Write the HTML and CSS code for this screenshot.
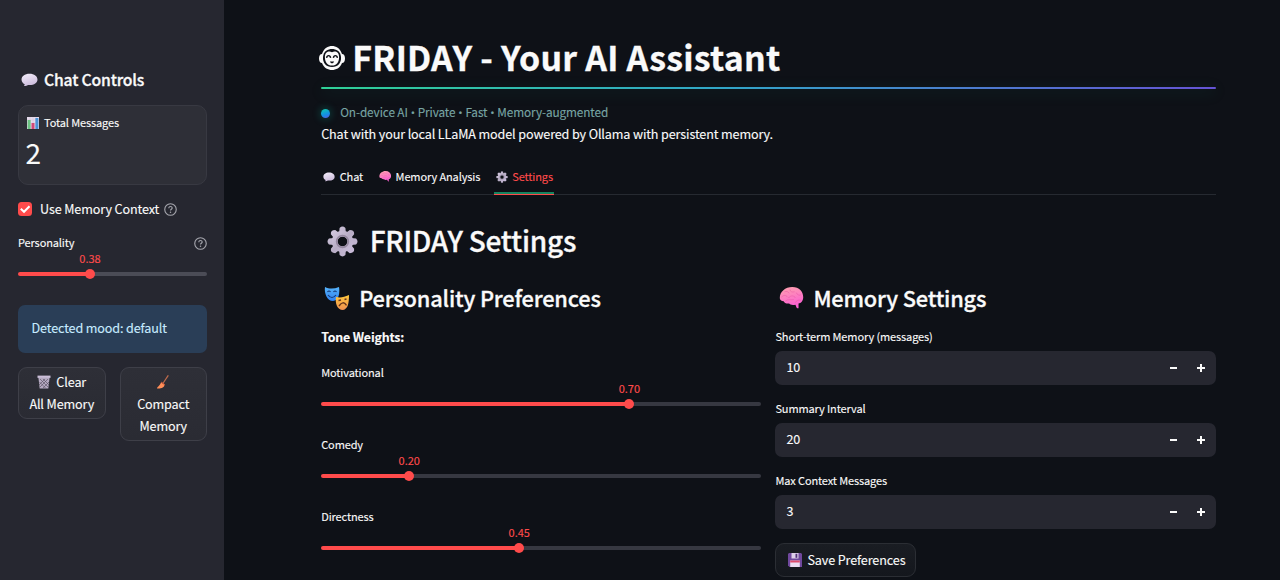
FILE: index.html
```html
<!DOCTYPE html>
<html lang="en">
<head>
<meta charset="utf-8">
<title>FRIDAY - Your AI Assistant</title>
<link rel="stylesheet" href="styles.css">
</head>
<body>
<svg class="defs" width="0" height="0" aria-hidden="true">
  <defs>
    <linearGradient id="lilac" x1="0" y1="0" x2="0.4" y2="1"><stop offset="0" stop-color="#f5effb"/><stop offset="1" stop-color="#cdbddd"/></linearGradient>
    <linearGradient id="steel" x1="0" y1="0" x2="1" y2="1"><stop offset="0" stop-color="#d5cbe2"/><stop offset="0.5" stop-color="#b8adc5"/><stop offset="1" stop-color="#cabddc"/></linearGradient>
    <linearGradient id="pink" x1="0" y1="0" x2="0.3" y2="1"><stop offset="0" stop-color="#ffa3ad"/><stop offset="1" stop-color="#fb5fd2"/></linearGradient>
    <linearGradient id="blue" x1="0" y1="0" x2="0" y2="1"><stop offset="0" stop-color="#56b4fb"/><stop offset="1" stop-color="#2f80ee"/></linearGradient>
    <linearGradient id="amber" x1="0" y1="0" x2="0" y2="1"><stop offset="0" stop-color="#ffc83d"/><stop offset="1" stop-color="#ef9050"/></linearGradient>
    <symbol id="bubble" viewBox="0 0 32 26"><path d="M16 1C7 1 1 5.700 1 12c0 4 2.300 7 6 9-.2 1.500-.9 2.500-1.500 3.200 3 .3 5.800-.8 7.500-2 9.800 1.200 18-2.700 18-10.200C31 5.700 25 1 16 1z" fill="url(#lilac)"/></symbol>
    <symbol id="brain" viewBox="0 0 32 28"><path d="M1 14C1 6 8 0 17 0s14 6 14 13c0 5-3 7.500-6 8v6c-3 .5-3-3-4-4.500-4 1-7 0-8-1.500-4 .5-6-1-7-3-3 0-5-1.500-5-4z" fill="url(#pink)"/><path d="M7 6c3-1 5 0 6 2M14 3c0 3 3 4 6 3M3 13c3-3 6-3 8 0M12 14c3-4 8-3 9 0M22 7c1 3 4 4 6 3M8 18c3-3 8-1 11-2M21 20c1-3 4-4 7-3" fill="none" stroke="#e653a0" stroke-opacity=".6" stroke-width="1"/></symbol>
    <symbol id="gear" viewBox="0 0 32 32"><g fill="url(#steel)"><path d="M12.500 7l.5-5q3-3 6 0l.5 5zM12.500 25l.5 5q3 3 6 0l.5-5zM7 12.500l-5 .5q-3 3 0 6l5 .5zM25 12.500l5 .5q3 3 0 6l-5 .5z"/><path d="M7.500 13L4 8.500Q3.500 4 8.500 4L13 7.500zM24.500 13L28 8.500Q28.500 4 23.500 4L19 7.500zM7.500 19L4 23.500Q3.500 28 8.500 28l4.500-3.500zM24.500 19l3.500 4.500q.5 4.500-4.500 4.500L19 24.500z"/><path fill-rule="evenodd" d="M16 5a11 11 0 1 0 0 22 11 11 0 0 0 0-22zm0 6a5 5 0 1 1 0 10 5 5 0 0 1 0-10z"/></g><circle cx="16" cy="16" r="6" fill="none" stroke="#94889f" stroke-width="1.800"/></symbol>
    <symbol id="help" viewBox="0 0 14 14"><circle cx="7" cy="7" r="6.200" fill="none" stroke="#a5a6ad" stroke-width="1.200"/><path d="M5.200 5.600c0-2.500 3.700-2.300 3.600-.1C8.700 6.800 7 6.800 7 8.200" fill="none" stroke="#a5a6ad" stroke-width="1.200"/><circle cx="7" cy="10" r=".8" fill="#a5a6ad"/></symbol>
  </defs>
</svg>
<div class="app">
  <aside class="sidebar">
    <h2 class="side-title"><svg class="side-bubble"><use href="#bubble"/></svg><span>Chat Controls</span></h2>
    <section class="metric">
      <div class="metric-label">
        <svg class="chart" viewBox="0 0 12 12"><rect width="12" height="12" fill="#e6dced"/><path d="M0 3h12M0 6h12M0 9h12M3 0v12M6 0v12M9 0v12" stroke="#c9bdd4" stroke-width=".4"/><path d="M.6 3h3v9h-3z" fill="#6cc382"/><path d="M4.500 6h3v6h-3z" fill="#d24a78"/><path d="M8.400 1h3v11h-3z" fill="#4c94d8"/></svg>
        <span>Total Messages</span>
      </div>
      <div class="metric-value">2</div>
    </section>
    <label class="check-row">
      <svg class="checkbox" viewBox="0 0 14 14"><rect width="14" height="14" rx="3.500" fill="#ff4b4b"/><path d="M2.800 6.800l3.200 3L11.500 4.200" fill="none" stroke="#fff" stroke-width="2"/></svg>
      <span class="check-text">Use Memory Context</span>
      <svg class="help"><use href="#help"/></svg>
    </label>
    <div class="slider side-slider" style="--v:38.1%">
      <div class="label"><span>Personality</span><svg class="help"><use href="#help"/></svg></div>
      <div class="range"><span class="value">0.38</span><div class="track"></div><i class="thumb"></i></div>
    </div>
    <div class="info">Detected mood: default</div>
    <div class="side-actions">
      <button class="btn side-btn"><svg class="bin" viewBox="0 0 14 14"><path d="M1.400 2.500h11.200L11.300 13.600H2.700z" fill="#b5aac1"/><path d="M3 4l8 8M6 4l6 6M2.500 7l6 6M11 4l-8 8M8 4l-6 6M12 7l-6 6" stroke="#5a5263" stroke-width=".65"/><path d="M.5 .6h13v2.300H.5z" fill="#cbbfd8"/></svg><span class="clear-text">Clear</span><br>All Memory</button>
      <button class="btn side-btn"><svg class="broom" viewBox="0 0 14 14"><path d="M12.300 .3L7.200 8" stroke="#bf6c4c" stroke-width="1.200"/><path d="M5 7.500l3.500 2.300c-.3 2.700-2.500 3.900-7.500 3.700.3-1.800 2.500-2.500 4-6z" fill="#ff8e58"/><path d="M5.300 7.200l3.400 2.400" stroke="#ef613d" stroke-width="1"/></svg><br>Compact<br>Memory</button>
    </div>
  </aside>
  <main class="main">
    <h1 class="title">
      <svg class="face" viewBox="0 0 28 26"><path d="M4 9C6 3 10 1 14 1s8 2 10 8c2 0 3 2 3 4.500S26 18 24 18c-2 5-6 7-10 7S6 23 4 18c-2 0-3-2-3-4.500S2 9 4 9z" fill="#fafafa"/><path d="M5 12C5.500 6 10 4 14 4s8.500 2 9 8c.4 6-3 10-9 10S4.600 18 5 12z" fill="#0e1117"/><path d="M6.900 12c0-5 4.100-6.500 7.100-4.700 3-1.800 7.100-.3 7.100 4.700 0 5.400-2.500 8.600-7.100 8.600S6.900 17.400 6.900 12z" fill="#fafafa"/><path d="M8.600 12.900c.4-3 3.600-3 4 0M15.400 12.900c.4-3 3.600-3 4 0" fill="none" stroke="#0e1117" stroke-width="1.400"/><path d="M11.900 16.500h4.200c-.7 2.400-3.500 2.400-4.200 0z" fill="#0e1117"/></svg>
      <span>FRIDAY - Your AI Assistant</span>
    </h1>
    <div class="rule"></div>
    <div class="status"><i class="dot"></i><span>On-device AI<b class="sep"> • </b>Private<b class="sep"> • </b>Fast<b class="sep"> • </b>Memory-augmented</span></div>
    <p class="intro">Chat with your local LLaMA model powered by Ollama with persistent memory.</p>
    <nav class="tabs">
      <a class="tab tab-chat"><svg class="tab-bubble"><use href="#bubble"/></svg><span>Chat</span></a>
      <a class="tab tab-memory"><svg class="tab-brain"><use href="#brain"/></svg><span>Memory Analysis</span></a>
      <a class="tab tab-settings active"><svg class="tab-gear"><use href="#gear"/></svg><span>Settings</span></a>
    </nav>
    <h2 class="page-title"><svg class="big-gear"><use href="#gear"/></svg><span>FRIDAY Settings</span></h2>
    <div class="columns">
      <section class="column">
        <h3 class="section-title personality">
          <svg class="masks" viewBox="0 0 26 26"><path d="M1 2c4 2 9 2 14 0 1 5 0 14-6 14S0 8 1 2z" fill="url(#blue)"/><path d="M3.500 7q1.500-2 3 0M9.500 7q1.500-2 3 0M4 10q4 5 8 0" fill="none" stroke="#173875" stroke-width="1.200"/><path d="M12 12c5 1 8 0 13-2 0 8-1 14-6 15-6 0-8-7-7-13z" fill="url(#amber)"/><path d="M14.500 15.500l2.500-.5M20.500 14.500l2-.5M15 21q4-6 7.500-.7" fill="none" stroke="#66351c" stroke-width="1.400"/></svg>
          <span>Personality Preferences</span>
        </h3>
        <p class="tone">Tone Weights:</p>
        <div class="slider" style="--v:70%"><div class="label"><span>Motivational</span></div><div class="range"><span class="value">0.70</span><div class="track"></div><i class="thumb"></i></div></div>
        <div class="slider" style="--v:20%"><div class="label"><span>Comedy</span></div><div class="range"><span class="value">0.20</span><div class="track"></div><i class="thumb"></i></div></div>
        <div class="slider" style="--v:45%"><div class="label"><span>Directness</span></div><div class="range"><span class="value">0.45</span><div class="track"></div><i class="thumb"></i></div></div>
      </section>
      <section class="column">
        <h3 class="section-title memory"><svg class="big-brain"><use href="#brain"/></svg><span>Memory Settings</span></h3>
        <div class="field"><div class="label">Short-term Memory (messages)</div><div class="number"><span>10</span><i class="minus"></i><i class="plus"></i></div></div>
        <div class="field"><div class="label">Summary Interval</div><div class="number"><span>20</span><i class="minus"></i><i class="plus"></i></div></div>
        <div class="field"><div class="label">Max Context Messages</div><div class="number"><span>3</span><i class="minus"></i><i class="plus"></i></div></div>
        <button class="btn save"><svg class="floppy" viewBox="0 0 14 14"><path d="M1 0h12l1 1v13H1.500L0 12.500V1z" fill="#70489d"/><path d="M3.500 0h7v5.500h-7z" fill="#ded0ea"/><path d="M7.500 .8h1.800v4H7.500z" fill="#513177"/><path d="M2.200 7.500h9.600V14H2.200z" fill="#eadcf2"/><path d="M2.200 7.500h9.600v2H2.200z" fill="#dd4b6c"/></svg><span>Save Preferences</span></button>
      </section>
    </div>
  </main>
</div>
</body>
</html>
```
FILE: styles.css
```css
* { box-sizing: border-box; }
html, body { margin: 0; height: 100%; overflow: hidden; }
body { background: #0e1117; color: #fafafa; font: 12.6px/20px "Source Sans Pro", "Noto Sans CJK SC", sans-serif; letter-spacing: -.12px; -webkit-text-stroke: .12px; }
h1, h2, h3 { margin: 0; font-weight: 500; -webkit-text-stroke: .3px; }
p { margin: 0; }
svg { display: block; flex: none; }
.defs { position: absolute; }
span { white-space: nowrap; }
.app { display: flex; height: 580px; }

.sidebar { width: 224.400px; flex: none; background: #262730; padding: 66px 17.400px 0 18px; }
.side-title { display: flex; align-items: center; height: 28px; gap: 6px; padding-left: 3px; font-size: 15.700px; letter-spacing: -.16px; }
.side-bubble { width: 17px; height: 14px; }
.metric { width: 189px; height: 80px; margin-top: 11px; padding: 6px 8px; border: 1px solid #383942; border-radius: 10px; background: #2e2f37; }
.metric-label { display: flex; align-items: center; gap: 5px; height: 21px; font-size: 11px; }
.metric-label span { padding-bottom: 1px; }
.chart { width: 12px; height: 12px; }
.metric-value { font-size: 28px; line-height: 38px; margin: 0 0 0 -1.500px; }
.check-row { display: flex; align-items: center; height: 20px; margin-top: 14px; }
.checkbox { width: 14px; height: 14px; }
.check-text { margin: 0 5px 1px 8px; }
.help { width: 13px; height: 13px; }
.side-slider { width: 189px; margin-top: 15px; }
.side-slider .label { justify-content: space-between; }
.info { width: 189px; height: 48px; margin-top: -1px; padding: 13px 13.500px; border-radius: 7px; background: #2a3e57; color: #c7ebff; letter-spacing: -.13px; }
.side-actions { display: flex; gap: 14px; width: 189px; margin-top: 14px; align-items: flex-start; }
.btn { font: inherit; letter-spacing: inherit; color: #fafafa; border: 1px solid #3e3f48; border-radius: 9px; background: linear-gradient(#2e2f37, #2a2b33); }
.side-btn { flex: 1; padding: 3px 6px; line-height: 22px; text-align: center; }
.bin, .broom { display: inline-block; width: 14px; height: 14px; vertical-align: -2px; }
.clear-text { margin-left: 5px; }

.slider { height: 72px; }
.label { display: flex; align-items: center; height: 18px; font-size: 11px; line-height: 18px; }
.slider .label span { padding-bottom: 2px; }
.field .label { padding-bottom: 3px; line-height: 15px; align-items: flex-start; }
.range { position: relative; padding-top: 20px; }
.track { height: 4px; border-radius: 2px; background: linear-gradient(to right, #ff4b4b var(--v), #363841 var(--v)); }
.sidebar .track { background: linear-gradient(to right, #ff4b4b var(--v), #4b4c56 var(--v)); }
.value { position: absolute; top: -3px; left: var(--v); transform: translateX(-50%); font-size: 11px; line-height: 18px; letter-spacing: 0; color: #ff4b4b; }
.thumb { position: absolute; top: 17px; left: var(--v); width: 10px; height: 10px; margin-left: -5px; border-radius: 50%; background: #ff4b4b; }

.main { flex: 1; padding: 33px 64.400px 0 96.800px; }
.title { display: flex; align-items: center; gap: 6px; height: 50px; margin-left: -3px; font-size: 33.900px; font-weight: 700; letter-spacing: .25px; }
.title span { padding-bottom: 2px; }
.face { width: 28px; height: 26px; }
.rule { height: 2px; margin-top: 4px; border-radius: 2px; background: linear-gradient(to right, #2fd197, #31a6c8 45%, #6653d5); box-shadow: 0 3px 14px rgba(24, 180, 143, .25); }
.status { display: flex; align-items: center; gap: 10px; height: 20px; margin-top: 14px; color: #78a5a4; font-size: 11.800px; letter-spacing: -.11px; }
.status span { padding-bottom: 2px; }
.sep { font: 11.500px/18px "Open Sans", sans-serif; }
.dot { width: 9px; height: 9px; border-radius: 50%; background: linear-gradient(160deg, #10cba7, #138ee5 60%, #6156df); box-shadow: 0 0 8px rgba(0, 207, 180, .4); }
.intro { height: 20px; margin-top: 1px; white-space: nowrap; letter-spacing: -.13px; }
.tabs { display: flex; height: 35px; margin-top: 16px; gap: 13.500px; border-bottom: 1px solid #262a31; font-size: 11px; }
.tab { display: flex; align-items: center; gap: 4.500px; height: 35px; padding: 0 0 1px 2px; }
.tab span { padding-bottom: 2px; }
.tab svg { margin-bottom: 1px; }
.tab-bubble { width: 12px; height: 10px; }
.tab-brain { width: 12.500px; height: 11px; }
.tab-gear { width: 12px; height: 12px; }
.active { width: 60px; color: #ff4b4b; background: linear-gradient(#168460, #168460) 0 32px / 100% 2px no-repeat, linear-gradient(#ff4b4b, #ff4b4b) 0 34px / 100% 1px no-repeat; }
.page-title { display: flex; align-items: center; gap: 12px; height: 44px; margin-top: 24px; padding-left: 5.500px; font-size: 28px; letter-spacing: -.25px; }
.page-title span { padding-bottom: 2px; }
.section-title span { padding-bottom: 1px; }
.big-gear { width: 31px; height: 31px; }
.columns { display: grid; grid-template-columns: 1fr 1fr; gap: 14px; margin-top: 16px; }
.section-title { display: flex; align-items: center; gap: 9px; height: 38px; padding-left: 3px; font-size: 21.800px; letter-spacing: -.18px; }
.masks { width: 26px; height: 26px; margin-bottom: 1px; }
.big-brain { width: 25px; height: 22px; }
.tone { height: 20px; margin: 10px 0 17px; font-weight: 700; font-size: 12.400px; letter-spacing: -.18px; }
.memory { margin-bottom: 12px; padding-left: 4px; }
.field { height: 72px; }
.number { display: flex; align-items: center; height: 34px; margin-top: 4px; padding: 0 11px; border-radius: 7px; background: #262730; }
.number span { flex: 1; padding-bottom: 2px; }
.minus, .plus { width: 8px; height: 8px; background: linear-gradient(#fafafa, #fafafa) center / 7px 2px no-repeat; }
.plus { margin-left: 19px; background: linear-gradient(#fafafa, #fafafa) center / 8px 2px no-repeat, linear-gradient(#fafafa, #fafafa) center / 2px 8px no-repeat; }
.save { display: flex; align-items: center; gap: 5px; width: 141px; height: 34px; margin-top: -2px; padding: 0 0 0 12px; background: linear-gradient(#1a1d23, #14171d); border-color: #2b2e34; }
.floppy { width: 14px; height: 14px; }
```
